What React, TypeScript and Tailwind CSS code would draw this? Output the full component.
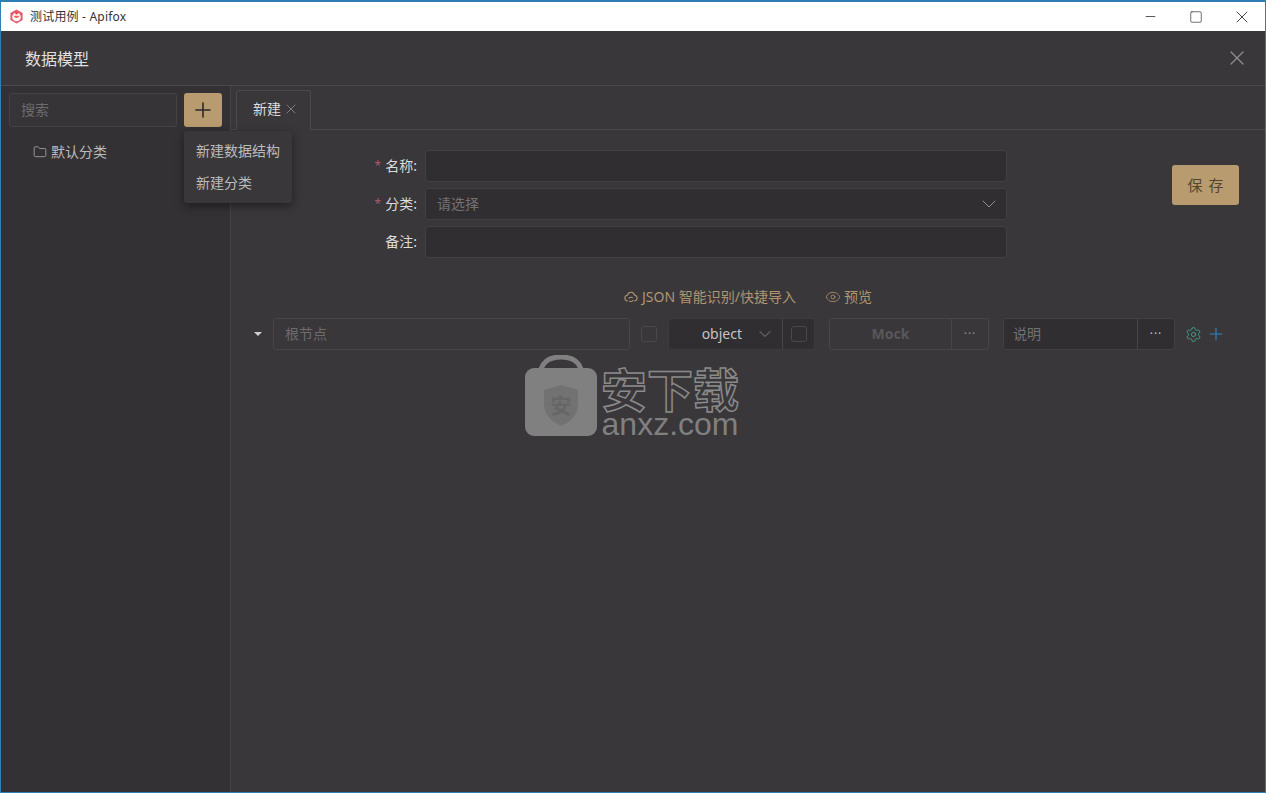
import { ChevronDown, Eye, Folder, Minus, Plus, Settings, Square, X } from 'lucide-react';

const CloudSync = () => (
	<svg width="14" height="14" viewBox="0 0 16 16" fill="none" stroke="currentColor" strokeWidth="1.2">
		<path d="M4.2 12.6C2.4 12.4 1 11 1 9.2c0-1.7 1.3-3.1 2.9-3.3C4.5 3.9 6.1 2.6 8 2.6s3.5 1.3 4.1 3.3c1.6.2 2.9 1.6 2.9 3.3 0 1.8-1.4 3.2-3.2 3.4" />
		<path d="M5.4 10.2c.3-1.1 1.4-1.9 2.6-1.9.8 0 1.5.3 2 .8M10.6 11.3c-.3 1.1-1.4 1.9-2.6 1.9-.8 0-1.5-.3-2-.8" />
	</svg>
);

const Logo = () => (
	<svg width="15" height="15" viewBox="0 0 16 16">
		<path d="M8 .5l6.5 3.7v7.6L8 15.5l-6.5-3.7V4.200z" fill="#e8596e" />
		<circle cx="8" cy="8.500" r="4.600" fill="#fff" />
		<path d="M4.800 7.200h6.400A3.300 3.300 0 0 1 4.800 7.200z" fill="#ee6a5e" />
		<circle cx="8" cy="4.500" r="1.300" fill="#e8434f" />
	</svg>
);

const Watermark = () => (
	<div className="absolute left-[524px] top-[353px] flex gap-[3px] pointer-events-none">
		<svg width="72" height="81" viewBox="0 0 72 81">
			<path d="M16 14C19 5 27 2 36 2s17 3 20 12" fill="none" stroke="#808080" strokeWidth="5" />
			<rect x="0" y="13" width="72" height="68" rx="9" fill="#808080" />
			<path d="M36 30l17 5v15c0 10-8 17-17 21-9-4-17-11-17-21V35z" fill="#727272" />
			<text x="36" y="58" textAnchor="middle" fontSize="21" fontWeight="700" fill="#666">
				安
			</text>
		</svg>
		<div className="flex flex-col items-center w-[140px] pt-[12px]">
			<div className="text-[46px] h-[45px] leading-[45px] font-bold text-transparent [-webkit-text-stroke:1.5px_#8a8a8a]">
				安下载
			</div>
			<div className="text-[32px] h-[24px] leading-[24px] text-[#808080] font-['Liberation_Sans',sans-serif]">
				anxz.com
			</div>
		</div>
	</div>
);

const FormRow = ({ label, required, children }: { label: string; required?: boolean; children?: React.ReactNode }) => (
	<div className="flex items-center">
		<label className="w-[187px] pr-[1px] flex justify-end items-center text-sm text-[#dcdcdc]">
			{required && <span className="text-[#a85a70] mr-1 text-xs">*</span>}
			{label}:
		</label>
		<div className="ml-[7px] w-[582px] h-8 rounded-[3px] border border-[#414043] bg-[#302e31] flex items-center justify-between pl-[11px] pr-[5px] text-sm text-[#737174]">
			{children}
		</div>
	</div>
);

const App = () => {
	return (
		<div className="relative w-[1266px] h-[793px] overflow-hidden flex flex-col border border-t-2 border-[#2f7fb5] bg-[#39373a] font-['Noto_Sans','Noto_Sans_CJK_SC',sans-serif]">
			<div className="h-[29px] bg-white flex items-center shrink-0">
				<div className="ml-[8px]">
					<Logo />
				</div>
				<span className="ml-[6px] text-xs tracking-[0.2px] text-[#333]">测试用例 - Apifox</span>
				<div className="ml-auto flex items-center text-[#222]">
					<div className="w-[46px] flex justify-center">
						<Minus size={15} strokeWidth={1.2} />
					</div>
					<div className="w-[46px] flex justify-center">
						<Square size={14} strokeWidth={1.1} />
					</div>
					<div className="w-[46px] flex justify-center">
						<X size={20} strokeWidth={1} />
					</div>
				</div>
			</div>

			<div className="h-[55px] shrink-0 flex items-center justify-between border-b border-[#4b494c] pl-6 pr-[16px]">
				<span className="text-base text-[#e0e0e0] mt-[1px]">数据模型</span>
				<X size={24} strokeWidth={1.2} className="text-[#8f8e90]" />
			</div>

			<div className="flex-1 flex min-h-0">
				<aside className="w-[230px] shrink-0 border-r border-[#464447] bg-[#333134]">
					<div className="flex gap-[7px] pl-2 pt-[7px]">
						<div className="w-[168px] h-[34px] rounded-[3px] border border-[#444245] bg-[#363437] flex items-center px-[11px] text-sm text-[#6d6b6e]">
							搜索
						</div>
						<div className="w-[38px] h-[34px] rounded-[3px] bg-[#b89c70] flex items-center justify-center text-[#2c2a26]">
							<Plus size={24} strokeWidth={1.6} />
						</div>
					</div>
					<div className="flex items-center gap-1 pl-[32px] mt-[15px] text-sm leading-5 text-[#bdbcbd]">
						<Folder size={14} strokeWidth={1.2} />
						<span>默认分类</span>
					</div>
				</aside>

				<main className="flex-1 min-w-0 flex flex-col">
					<div className="h-[44px] shrink-0 border-b border-[#4b494c] flex items-end pl-[5px]">
						<div className="w-[75px] h-[40px] -mb-px pb-[3px] rounded-t-[3px] border border-b-0 border-[#4b494c] bg-[#39373a] flex items-center pl-4 gap-[2px] text-sm text-[#dcdcdc]">
							<span>新建</span>
							<X size={16} strokeWidth={1.2} className="text-[#8f8e90]" />
						</div>
					</div>

					<div className="flex pt-5">
						<div className="flex flex-col gap-[6px]">
							<FormRow label="名称" required />
							<FormRow label="分类" required>
								<span>请选择</span>
								<ChevronDown size={24} strokeWidth={1} className="text-[#8f8e90]" />
							</FormRow>
							<FormRow label="备注" />
						</div>
						<button className="ml-[165px] mt-[15px] w-[67px] h-[40px] rounded-[3px] bg-[#b89c70] pl-[6px] text-[15px] text-[#54472f] tracking-[6px]">
							保存
						</button>
					</div>

					<div className="mt-[29px] h-5 flex items-center pl-[393px] text-sm text-[#b09570]">
						<CloudSync />
						<span className="ml-[4px]">JSON 智能识别/快捷导入</span>
						<Eye size={16} strokeWidth={1.2} className="ml-[29px]" />
						<span className="ml-[3px]">预览</span>
					</div>

					<div className="mt-[11px] flex items-center pl-[23px]">
						<div className="w-0 h-0 border-x-[4px] border-x-transparent border-t-[4px] border-t-[#cfcfcf]" />
						<div className="ml-[11px] w-[357px] h-8 rounded-[3px] border border-[#474548] flex items-center px-[11px] text-sm text-[#6d6b6e]">
							根节点
						</div>
						<div className="ml-[11px] w-4 h-4 rounded-[3px] border border-[#4a484b]" />
						<div className="ml-[11px] w-[147px] h-8 rounded-[3px] border border-[#3d3b3e] bg-[#302e31] flex items-center">
							<div className="w-[114px] h-full shrink-0 border-r border-[#474548] flex items-center justify-end pr-[7px] gap-[13px] text-sm text-[#c4c3c4]">
								<span>object</span>
								<ChevronDown size={20} strokeWidth={1} className="text-[#8f8e90]" />
							</div>
							<div className="ml-2 w-4 h-4 rounded-[3px] border border-[#4a484b]" />
						</div>
						<div className="ml-[14px] w-[160px] h-8 rounded-[3px] border border-[#474548] flex items-center">
							<div className="w-[122px] h-full shrink-0 border-r border-[#474548] flex items-center justify-center text-sm font-bold text-[#59575a]">
								Mock
							</div>
							<div className="flex-1 text-center text-xs leading-none tracking-[1px] text-[#8f8e90]">···</div>
						</div>
						<div className="ml-[14px] w-[172px] h-8 rounded-[3px] border border-[#414043] bg-[#302e31] flex items-center">
							<div className="w-[134px] h-full shrink-0 border-r border-[#474548] flex items-center px-[9px] text-sm text-[#737174]">
								说明
							</div>
							<div className="flex-1 text-center text-xs leading-none tracking-[1px] text-[#c4c3c4]">···</div>
						</div>
						<Settings size={17} strokeWidth={1.3} className="ml-[10px] text-[#3fa88a]" />
						<Plus size={20} strokeWidth={1.3} className="ml-[4px] text-[#2f86c4]" />
					</div>
				</main>
			</div>

			<div className="absolute left-[183px] top-[129px] w-[108px] h-[72px] rounded-[3px] bg-[#39373a] shadow-[0_3px_10px_rgba(0,0,0,0.45)] flex flex-col justify-center gap-3 pl-3 text-sm leading-5 text-[#bdbcbd]">
				<span>新建数据结构</span>
				<span>新建分类</span>
			</div>

			<Watermark />
		</div>
	);
};

export default App;
